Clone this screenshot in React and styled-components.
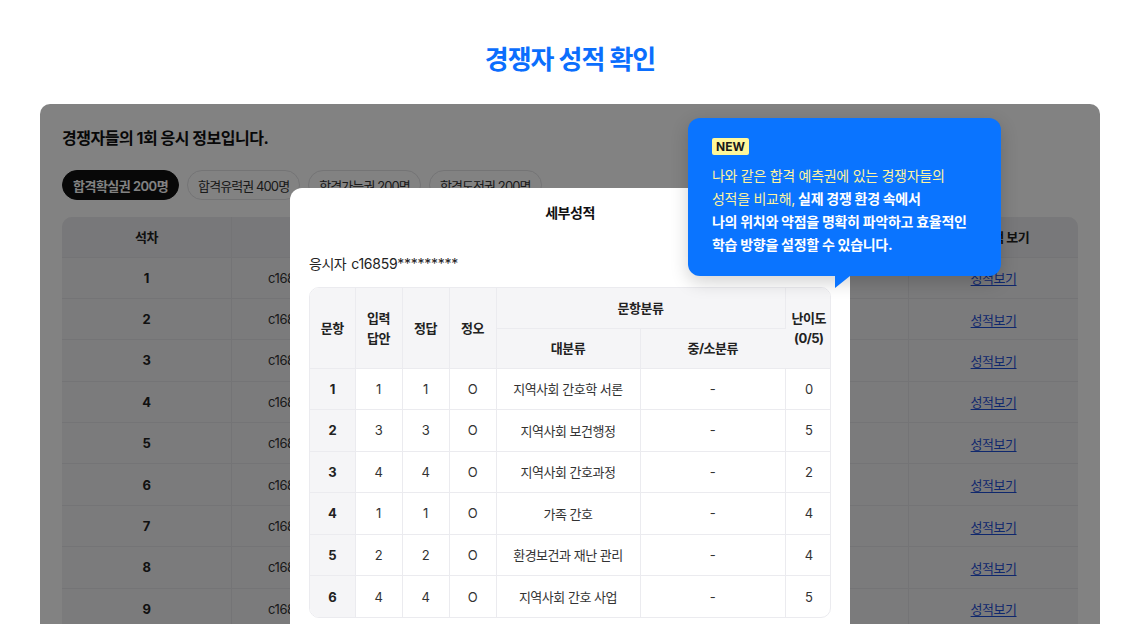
import styled, { createGlobalStyle } from "styled-components";

const GlobalStyle = createGlobalStyle`
  html, body {
    margin: 0;
    padding: 0;
    background: #fff;
    overflow: hidden;
  }
  body {
    font-family: Inter, "Noto Sans CJK KR", sans-serif;
    color: #222;
    letter-spacing: -0.03em;
  }
  * { box-sizing: border-box; }
`;

const Page = styled.main`
  padding: 0 40px;
`;

const Title = styled.h1`
  margin: 0;
  padding-top: 42px;
  height: 104px;
  text-align: center;
  font-size: 26px;
  font-weight: 700;
  line-height: 36px;
  letter-spacing: -0.04em;
  color: #0b6efd;
`;

const Panel = styled.section`
  position: relative;
  border-radius: 10px;
  overflow: hidden;
  background: #fff;
  padding: 23px 22px 40px;
`;

const PanelTitle = styled.h2`
  margin: 0;
  font-size: 16px;
  font-weight: 700;
  line-height: 22px;
  color: #111;
`;

const Tabs = styled.div`
  display: flex;
  gap: 8px;
  margin-top: 21px;
`;

const Tab = styled.button`
  height: 30px;
  padding: 0 10px;
  border-radius: 15px;
  border: 1px solid ${(p) => (p.$active ? "#111" : "#e3e3e6")};
  background: ${(p) => (p.$active ? "#111" : "#fff")};
  color: ${(p) => (p.$active ? "#fff" : "#333")};
  font-family: inherit;
  font-size: 13px;
  font-weight: ${(p) => (p.$active ? 600 : 400)};
  letter-spacing: ${(p) => (p.$active ? "-0.04em" : "-0.07em")};
`;

const RankWrap = styled.div`
  margin-top: 17px;
  border-radius: 10px;
  overflow: hidden;
  background: #f2f2f4;
`;

const RankTable = styled.table`
  width: 100%;
  border-collapse: collapse;
  table-layout: fixed;
  font-size: 13px;

  th {
    height: 40px;
    font-weight: 700;
    color: #222;
    background: #ececef;
  }
  td {
    height: 41.4px;
    text-align: center;
    color: #333;
    border-top: 1px solid #e4e4e8;
  }
  th + th, td + td {
    border-left: 1px solid #e4e4e8;
  }
`;

const Rank = styled.td`
  && { font-weight: 700; color: #222; }
`;

const ScoreLink = styled.a`
  color: #1f4fd6;
  text-decoration: underline;
  text-underline-offset: 2px;
`;

const Dim = styled.div`
  position: absolute;
  inset: 0;
  background: rgba(0, 0, 0, 0.49);
`;

const Modal = styled.div`
  position: absolute;
  top: 84px;
  left: 250px;
  width: 560px;
  background: #fff;
  border-radius: 12px;
  padding: 0 19px 24px;
`;

const ModalHeader = styled.h3`
  margin: 0;
  height: 48px;
  display: flex;
  align-items: center;
  justify-content: center;
  font-size: 14px;
  font-weight: 700;
  color: #111;
`;

const Applicant = styled.p`
  margin: 18px 0 0;
  display: flex;
  gap: 5px;
  font-size: 14px;
  line-height: 20px;
  color: #222;

  span:last-child {
    letter-spacing: -0.02em;
  }
`;

const DetailWrap = styled.div`
  margin-top: 13px;
  border: 1px solid #ebebef;
  border-radius: 10px;
  overflow: hidden;
`;

const DetailTable = styled.table`
  width: 100%;
  border-collapse: collapse;
  table-layout: fixed;
  font-size: 13px;

  th, td {
    text-align: center;
    border-right: 1px solid #ebebef;
    border-bottom: 1px solid #ebebef;
  }
  th:last-child, td:last-child { border-right: 0; }
  tbody tr:last-child td { border-bottom: 0; }

  th {
    background: #f5f5f7;
    font-weight: 700;
    color: #222;
    line-height: 20px;
    height: 40px;
  }
  td {
    height: 41.5px;
    color: #333;
  }
  td:first-child {
    background: #f5f5f7;
    font-weight: 700;
    color: #222;
  }
`;

const Tooltip = styled.div`
  position: absolute;
  top: 14px;
  left: 648px;
  width: 313px;
  height: 158px;
  padding: 20px 24px;
  border-radius: 12px;
  background: #0a74ff;
  box-shadow: 0 6px 18px rgba(0, 0, 0, 0.18);

  &::after {
    content: "";
    position: absolute;
    top: 158px;
    right: 151px;
    width: 15px;
    height: 12px;
    background: #0a74ff;
    clip-path: polygon(0 0, 100% 0, 0 100%);
  }
`;

const Badge = styled.span`
  display: block;
  width: max-content;
  height: 17px;
  padding: 0 4px;
  border-radius: 2px;
  background: #fff79a;
  color: #1a1a1a;
  font-size: 12px;
  font-weight: 700;
  line-height: 17px;
  letter-spacing: 0;
`;

const TipText = styled.p`
  margin: 9px 0 0;
  font-size: 14px;
  line-height: 23px;
  font-weight: 700;
  letter-spacing: -0.02em;
  color: #fff;
`;

const Soft = styled.span`
  font-weight: 400;
  color: #fdf3a0;
`;

const ranks = [1, 2, 3, 4, 5, 6, 7, 8, 9, 10];

const details = [
  [1, 1, 1, "O", "지역사회 간호학 서론", "-", 0],
  [2, 3, 3, "O", "지역사회 보건행정", "-", 5],
  [3, 4, 4, "O", "지역사회 간호과정", "-", 2],
  [4, 1, 1, "O", "가족 간호", "-", 4],
  [5, 2, 2, "O", "환경보건과 재난 관리", "-", 4],
  [6, 4, 4, "O", "지역사회 간호 사업", "-", 5],
];

export default function App() {
  return (
    <Page>
      <GlobalStyle />
      <Title>경쟁자 성적 확인</Title>
      <Panel>
        <PanelTitle>경쟁자들의 1회 응시 정보입니다.</PanelTitle>
        <Tabs>
          <Tab $active>합격확실권 200명</Tab>
          <Tab>합격유력권 400명</Tab>
          <Tab>합격가능권 200명</Tab>
          <Tab>합격도전권 200명</Tab>
        </Tabs>
        <RankWrap>
          <RankTable>
            <thead>
              <tr>
                <th>석차</th>
                <th>응시자</th>
                <th>총점</th>
                <th>백분위</th>
                <th>등급</th>
                <th>세부성적 보기</th>
              </tr>
            </thead>
            <tbody>
              {ranks.map((r) => (
                <tr key={r}>
                  <Rank>{r}</Rank>
                  <td>c16859*********</td>
                  <td>{100 - r}</td>
                  <td>{99 - r}</td>
                  <td>1</td>
                  <td>
                    <ScoreLink href="#">성적보기</ScoreLink>
                  </td>
                </tr>
              ))}
            </tbody>
          </RankTable>
        </RankWrap>

        <Dim />

        <Modal>
          <ModalHeader>세부성적</ModalHeader>
          <Applicant>
            <span>응시자</span>
            <span>c16859*********</span>
          </Applicant>
          <DetailWrap>
            <DetailTable>
              <colgroup>
                <col style={{ width: 45 }} />
                <col style={{ width: 47 }} />
                <col style={{ width: 47 }} />
                <col style={{ width: 47 }} />
                <col style={{ width: 144 }} />
                <col style={{ width: 145 }} />
                <col style={{ width: 47 }} />
              </colgroup>
              <thead>
                <tr>
                  <th rowSpan={2}>문항</th>
                  <th rowSpan={2}>
                    입력
                    <br />
                    답안
                  </th>
                  <th rowSpan={2}>정답</th>
                  <th rowSpan={2}>정오</th>
                  <th colSpan={2}>문항분류</th>
                  <th rowSpan={2}>
                    난이도
                    <br />
                    (0/5)
                  </th>
                </tr>
                <tr>
                  <th>대분류</th>
                  <th>중/소분류</th>
                </tr>
              </thead>
              <tbody>
                {details.map((row) => (
                  <tr key={row[0]}>
                    {row.map((cell, i) => (
                      <td key={i}>{cell}</td>
                    ))}
                  </tr>
                ))}
              </tbody>
            </DetailTable>
          </DetailWrap>
        </Modal>

        <Tooltip>
          <Badge>NEW</Badge>
          <TipText>
            <Soft>
              나와 같은 합격 예측권에 있는 경쟁자들의
              <br />
              성적을 비교해,
            </Soft>{" "}
            실제 경쟁 환경 속에서
            <br />
            나의 위치와 약점을 명확히 파악하고 효율적인
            <br />
            학습 방향을 설정할 수 있습니다.
          </TipText>
        </Tooltip>
      </Panel>
    </Page>
  );
}
